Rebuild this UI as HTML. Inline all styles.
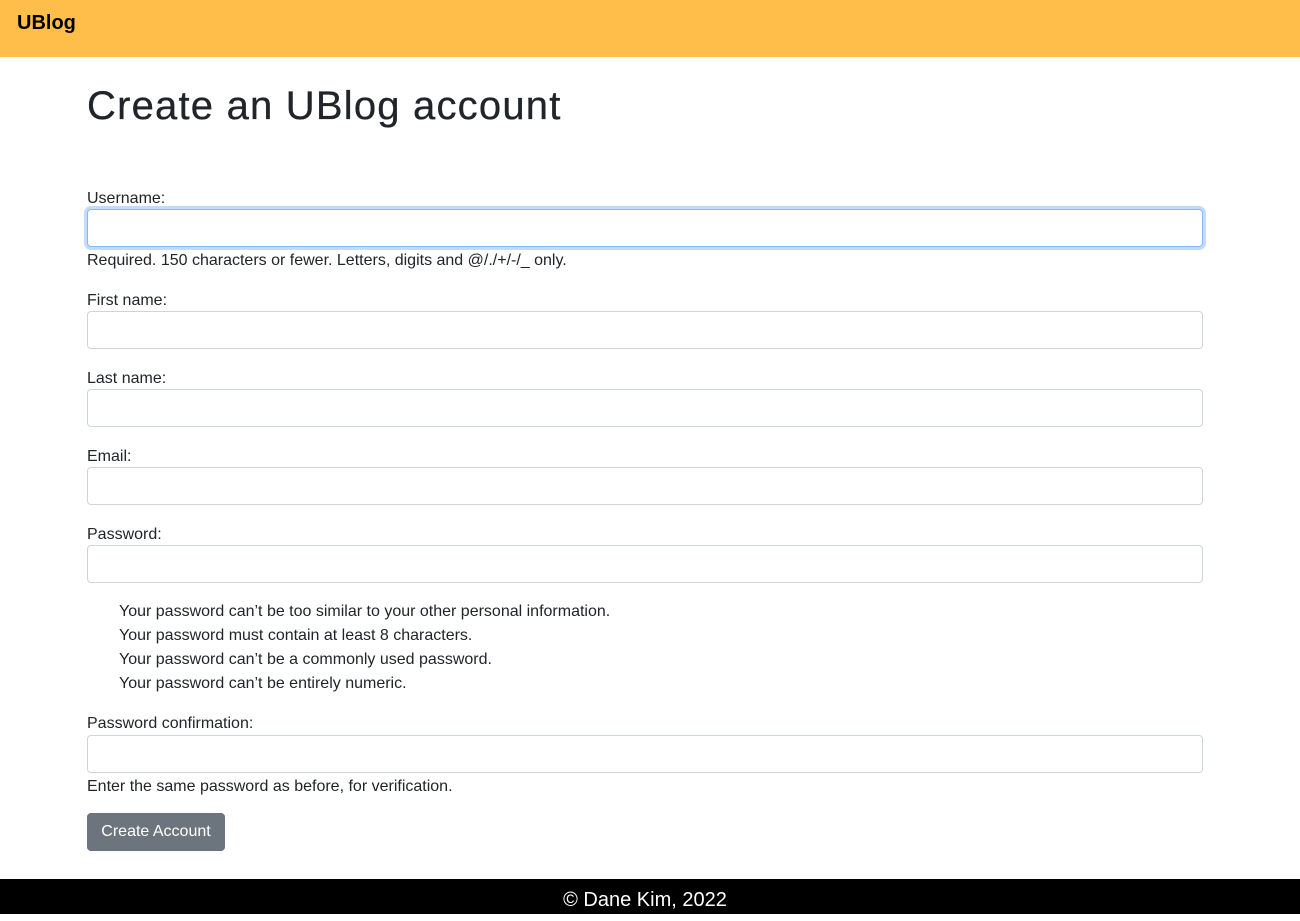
<!DOCTYPE html>
<html><head><meta charset="utf-8"><style>
*{box-sizing:border-box;margin:0;padding:0}
body{width:1300px;height:914px;overflow:hidden;font-family:"Liberation Sans",sans-serif;font-size:16px;line-height:24px;color:#212529;background:#fff;position:relative}
.nav{height:57px;background:#ffbd4a;}
.nav b{position:absolute;left:17px;top:11px;font-size:20px;line-height:24px;font-weight:700;color:#000}
.c{position:absolute;left:87px;width:1116px;top:82px}
h1{font-size:40px;line-height:48px;font-weight:500;margin-bottom:55px;letter-spacing:1.2px;-webkit-text-stroke:0.3px #212529}
label,.t,li{display:block;position:relative;top:2px}
label{height:24px}
.in{height:38px;border:1px solid #ced4da;border-radius:4px;background:#fff}
.in.f{border-color:#86b7fe;box-shadow:0 0 0 3px rgba(13,110,253,.25)}
.g{margin-bottom:16px}
ul{list-style:none;padding-left:32px;margin:15px 0 16px}
.btn{display:inline-block;background:#6c757d;color:#fff;height:38px;line-height:38px;padding:0 12px;border-radius:4px;width:138px;text-align:center}
.foot{position:absolute;left:0;top:879px;width:1300px;height:35px;background:#000;color:#fff;text-align:center;font-size:20px;line-height:42px;padding-right:10px}
</style></head><body>
<div class="nav"><b>UBlog</b></div>
<div class="c">
<h1>Create an UBlog account</h1>
<label>Username:</label><div class="in f"></div>
<div class="g t">Required. 150 characters or fewer. Letters, digits and @/./+/-/_ only.</div>
<label>First name:</label><div class="in g"></div>
<label>Last name:</label><div class="in g"></div>
<label>Email:</label><div class="in g"></div>
<label>Password:</label><div class="in"></div>
<ul><li>Your password can’t be too similar to your other personal information.</li><li>Your password must contain at least 8 characters.</li><li>Your password can’t be a commonly used password.</li><li>Your password can’t be entirely numeric.</li></ul>
<label style="height:25px">Password confirmation:</label><div class="in"></div>
<div class="g t">Enter the same password as before, for verification.</div>
<div class="btn">Create Account</div>
</div>
<div class="foot">© Dane Kim, 2022</div>
</body></html>
